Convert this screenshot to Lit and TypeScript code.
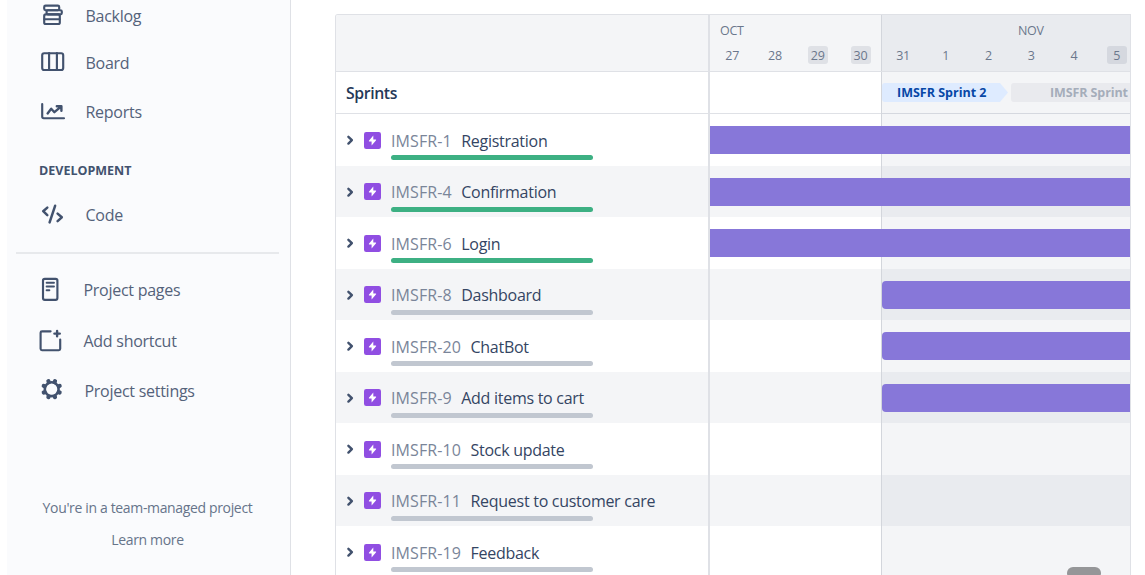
import { LitElement, html, css, svg } from "lit";
import { customElement, property } from "lit/decorators.js";
import { classMap } from "lit/directives/class-map.js";

const teeth = [22.5, 67.5, 112.5, 157.5, 202.5, 247.5, 292.5, 337.5];

const icons: Record<string, unknown> = {
  backlog: svg`
    <rect x="6.2" y="3.6" width="15" height="4.6" rx="1.4"/>
    <rect x="8.6" y="8.2" width="15.2" height="4.2" rx="1.4"/>
    <rect x="6.2" y="12.4" width="15.6" height="9.6" rx="1.6"/>
    <path d="M6.5 17.2H21.5"/>`,
  board: svg`
    <rect x="4.2" y="4.2" width="21" height="16.8" rx="2"/>
    <path d="M11.1 4V20.8M18.9 4V20.8"/>`,
  reports: svg`
    <path d="M4.2 6V18.6Q4.2 20.2 5.8 20.2H26"/>
    <path d="M9.6 15.4L13.2 10.8L16.4 14.2L23 8.6M18.8 8.3H23.4V12.8" stroke-width="2.4"/>`,
  code: svg`
    <path d="M9.3 6.6L5.2 10.2L9.3 14.2M17.1 4.8L11.6 21.4M19.6 12.6L23.8 16.3L19.6 20.2" stroke-width="2.5"/>`,
  pages: svg`
    <rect x="5" y="2.8" width="14.4" height="21" rx="1.8"/>
    <path d="M8.6 6.8H16M8.6 10.5H16M8.6 14.3H11.4" stroke-width="1.9"/>`,
  shortcut: svg`
    <path d="M12.6 4.3H4Q2.6 4.3 2.6 5.7V21.8Q2.6 23.2 4 23.2H20.8Q22.2 23.2 22.2 21.8V12.6"/>
    <path d="M19.1 3.9V9.3M16.4 6.6H21.8" stroke-width="2.4"/>`,
  settings: svg`
    <circle cx="13.7" cy="12.2" r="6.9" stroke-width="2.6"/>
    ${teeth.map(
      (a) => svg`<path transform="rotate(${a} 13.7 12.2)" d="M13.7 4.4V3.6" stroke-width="4.2"/>`
    )}`,
};

@customElement("nav-item")
class NavItem extends LitElement {
  @property() icon = "";
  @property() label = "";
  static styles = css`
    :host { display: flex; align-items: center; box-sizing: border-box; padding-left: 31px; }
    svg { width: 28px; height: 28px; flex: none; fill: none; stroke: #42526e; stroke-width: 2.15;
      stroke-linecap: round; stroke-linejoin: round; margin-right: var(--gap, 19.5px); }
    span { font-size: 16px; line-height: 24px; letter-spacing: -0.27px; color: #54627a; white-space: nowrap; }
  `;
  render() {
    return html`<svg viewBox="0 0 28 28">${icons[this.icon]}</svg><span>${this.label}</span>`;
  }
}

interface Epic { key: string; name: string; done?: boolean; start?: "oct" | "nov"; }

const epics: Epic[] = [
  { key: "IMSFR-1", name: "Registration", done: true, start: "oct" },
  { key: "IMSFR-4", name: "Confirmation", done: true, start: "oct" },
  { key: "IMSFR-6", name: "Login", done: true, start: "oct" },
  { key: "IMSFR-8", name: "Dashboard", start: "nov" },
  { key: "IMSFR-20", name: "ChatBot", start: "nov" },
  { key: "IMSFR-9", name: "Add items to cart", start: "nov" },
  { key: "IMSFR-10", name: "Stock update" },
  { key: "IMSFR-11", name: "Request to customer care" },
  { key: "IMSFR-19", name: "Feedback" },
];

const octDays = [27, 28, 29, 30];
const novDays = [31, 1, 2, 3, 4, 5];
const weekend = new Set([29, 30, 5]);

@customElement("app-root")
class AppRoot extends LitElement {
  static styles = css`
    :host { display: flex; width: 1145px; height: 575px; overflow: hidden; background: #fff;
      font-family: "Open Sans", "Noto Sans", sans-serif; box-sizing: border-box; padding-left: 7px; }
    * { box-sizing: border-box; }

    .sidebar { width: 284px; flex: none; height: 575px; background: #fafbfd;
      border-right: 1px solid #dfe1e6; overflow: hidden; }
    .nav { display: flex; flex-direction: column; margin-top: -8px; }
    .h46 { height: 46px; }
    .h48 { height: 48px; }
    .h50 { height: 50px; }
    .h52 { height: 52px; }
    .h26 { height: 26px; }
    .near { --gap: 17.5px; }
    .mid { --gap: 18.5px; }
    .heading { height: 64px; line-height: 65px; padding-left: 32px; font-size: 12.5px; font-weight: 700;
      letter-spacing: 0; color: #42526e; }
    .rule { height: 2px; margin: 24px 11px 10px 9px; background: #e7e9ec; }
    .foot { padding-top: 76px; text-align: center; font-size: 14px; line-height: 32px; color: #66748a;
      letter-spacing: -0.35px; padding-right: 2px; }
    .foot div { white-space: nowrap; }

    .table { margin: 14px 0 0 44px; width: 796px; height: 561px; flex: none; overflow: hidden;
      border: 1px solid #dfe1e6; border-bottom: 0; border-top-left-radius: 3px; position: relative; }
    .row { display: grid; grid-template-columns: 374px 1fr; height: 51.55px; }
    .head { height: 57px; background: #f4f5f7; border-bottom: 1px solid #dfe1e6; }
    .sprints { height: 42px; border-bottom: 1px solid #dfe1e6; }
    .alt { background: #f4f5f7; }
    .left { border-right: 2px solid #dfe1e6; display: flex; min-width: 0; }
    .time { display: grid; grid-template-columns: 171px 1fr; grid-template-rows: 100%; min-width: 0; overflow: hidden; }
    .nov { grid-column: 2; grid-row: 1; background: rgba(9, 30, 66, 0.045); border-left: 1px solid #d3d6dc; min-width: 0; }
    .oct { grid-column: 1; grid-row: 1; }

    .month { font-size: 12.5px; line-height: 16px; height: 16px; margin-top: 8px; color: #6b778c; letter-spacing: -0.3px; }
    .oct .month { padding-left: 10px; }
    .nov .month { padding-left: 136px; }
    .days { display: flex; margin-top: 7px; }
    .oct .days { margin-left: 0.9px; }
    .nov .days { margin-left: -0.3px; }
    .day { width: 42.75px; flex: none; display: flex; justify-content: center; }
    .day span { width: 20px; height: 18px; line-height: 18px; padding-top: 1px; text-align: center; border-radius: 3px;
      font-size: 12.5px; letter-spacing: -0.2px; color: #6b778c; }
    .day .off { background: rgba(9, 30, 66, 0.09); }

    .title { padding-left: 10px; line-height: 42px; font-size: 15.8px; font-weight: 600; color: #253858; letter-spacing: -0.4px; }
    .flags { grid-column: 2; grid-row: 1; display: flex; gap: 3px; padding: 11px 0 0 1px; min-width: 0; overflow: hidden; }
    .flag { height: 19px; line-height: 19px; font-size: 12.5px; font-weight: 700; letter-spacing: 0; flex: none; white-space: nowrap; }
    .active { width: 126px; padding-left: 15px; background: #deebff; color: #0747a6; border-radius: 3px 0 0 3px;
      clip-path: polygon(0 0, 118px 0, 126px 50%, 118px 100%, 0 100%); }
    .future { width: 119px; padding-left: 39px; background: #e9eaee; color: #a5adba; border-radius: 3px 0 0 3px; letter-spacing: -0.1px; }

    .chev { width: 8px; height: 12px; margin: 20px 0 0 9.5px; flex: none; }
    .bolt { width: 17px; height: 17px; margin: 17.5px 0 0 10.5px; flex: none; }
    .text { margin: 14.6px 0 0 10px; }
    .line { font-size: 16px; line-height: 24px; height: 26.4px; white-space: nowrap; display: flex; }
    .key { color: #7a8599; letter-spacing: 0.1px; margin-right: 9.5px; }
    .name { color: #344563; letter-spacing: -0.28px; }
    .progress { width: 202px; height: 5px; border-radius: 3px; background: #c1c7d0; }
    .done { background: #3db083; }

    .bar { grid-row: 1; height: 28px; margin-top: 12px; background: #8777d9; z-index: 1; }
    .from-oct { grid-column: 1 / -1; }
    .from-nov { grid-column: 2; border-radius: 4px 0 0 4px; margin-left: 1px; }
    .thumb { position: absolute; left: 731px; top: 552px; width: 34px; height: 12px; border-radius: 6px; background: #959698; z-index: 2; }
  `;

  day(d: number) {
    return html`<div class="day"><span class=${classMap({ off: weekend.has(d) })}>${d}</span></div>`;
  }

  epic(e: Epic, i: number) {
    return html`<div class=${classMap({ row: true, alt: i % 2 === 1 })}>
      <div class="left">
        <svg class="chev" viewBox="0 0 8 12"><path d="M2.4 2.8L5.9 6.2L2.4 9.6" fill="none" stroke="#42526e" stroke-width="2.4" stroke-linecap="round" stroke-linejoin="round"/></svg>
        <svg class="bolt" viewBox="0 0 17 17"><rect width="17" height="17" rx="2.2" fill="#904ee2"/><path d="M9.3 3.4L4.9 8.8Q4.6 9.4 5.3 9.4H7.6V13.6L12.1 8.3Q12.4 7.6 11.7 7.6H9.3Z" fill="#fff"/></svg>
        <div class="text">
          <div class="line"><span class="key">${e.key}</span><span class="name">${e.name}</span></div>
          <div class=${classMap({ progress: true, done: !!e.done })}></div>
        </div>
      </div>
      <div class="time">
        <div class="nov"></div>
        ${e.start ? html`<div class="bar from-${e.start}"></div>` : null}
      </div>
    </div>`;
  }

  render() {
    return html`
      <div class="sidebar">
        <div class="nav">
          <nav-item class="h48" icon="backlog" label="Backlog"></nav-item>
          <nav-item class="h46" icon="board" label="Board"></nav-item>
          <nav-item class="h52" icon="reports" label="Reports"></nav-item>
          <div class="heading">DEVELOPMENT</div>
          <nav-item class="h26" icon="code" label="Code"></nav-item>
          <div class="rule"></div>
          <nav-item class="h52 near" icon="pages" label="Project pages"></nav-item>
          <nav-item class="h50 near" icon="shortcut" label="Add shortcut"></nav-item>
          <nav-item class="h50 mid" icon="settings" label="Project settings"></nav-item>
        </div>
        <div class="foot"><div>You're in a team-managed project</div><div>Learn more</div></div>
      </div>
      <div class="table">
        <div class="row head">
          <div class="left"></div>
          <div class="time">
            <div class="oct"><div class="month">OCT</div><div class="days">${octDays.map((d) => this.day(d))}</div></div>
            <div class="nov"><div class="month">NOV</div><div class="days">${novDays.map((d) => this.day(d))}</div></div>
          </div>
        </div>
        <div class="row sprints">
          <div class="left"><div class="title">Sprints</div></div>
          <div class="time">
            <div class="nov"></div>
            <div class="flags"><div class="flag active">IMSFR Sprint 2</div><div class="flag future">IMSFR Sprint</div></div>
          </div>
        </div>
        ${epics.map((e, i) => this.epic(e, i))}
        <div class="thumb"></div>
      </div>`;
  }
}
